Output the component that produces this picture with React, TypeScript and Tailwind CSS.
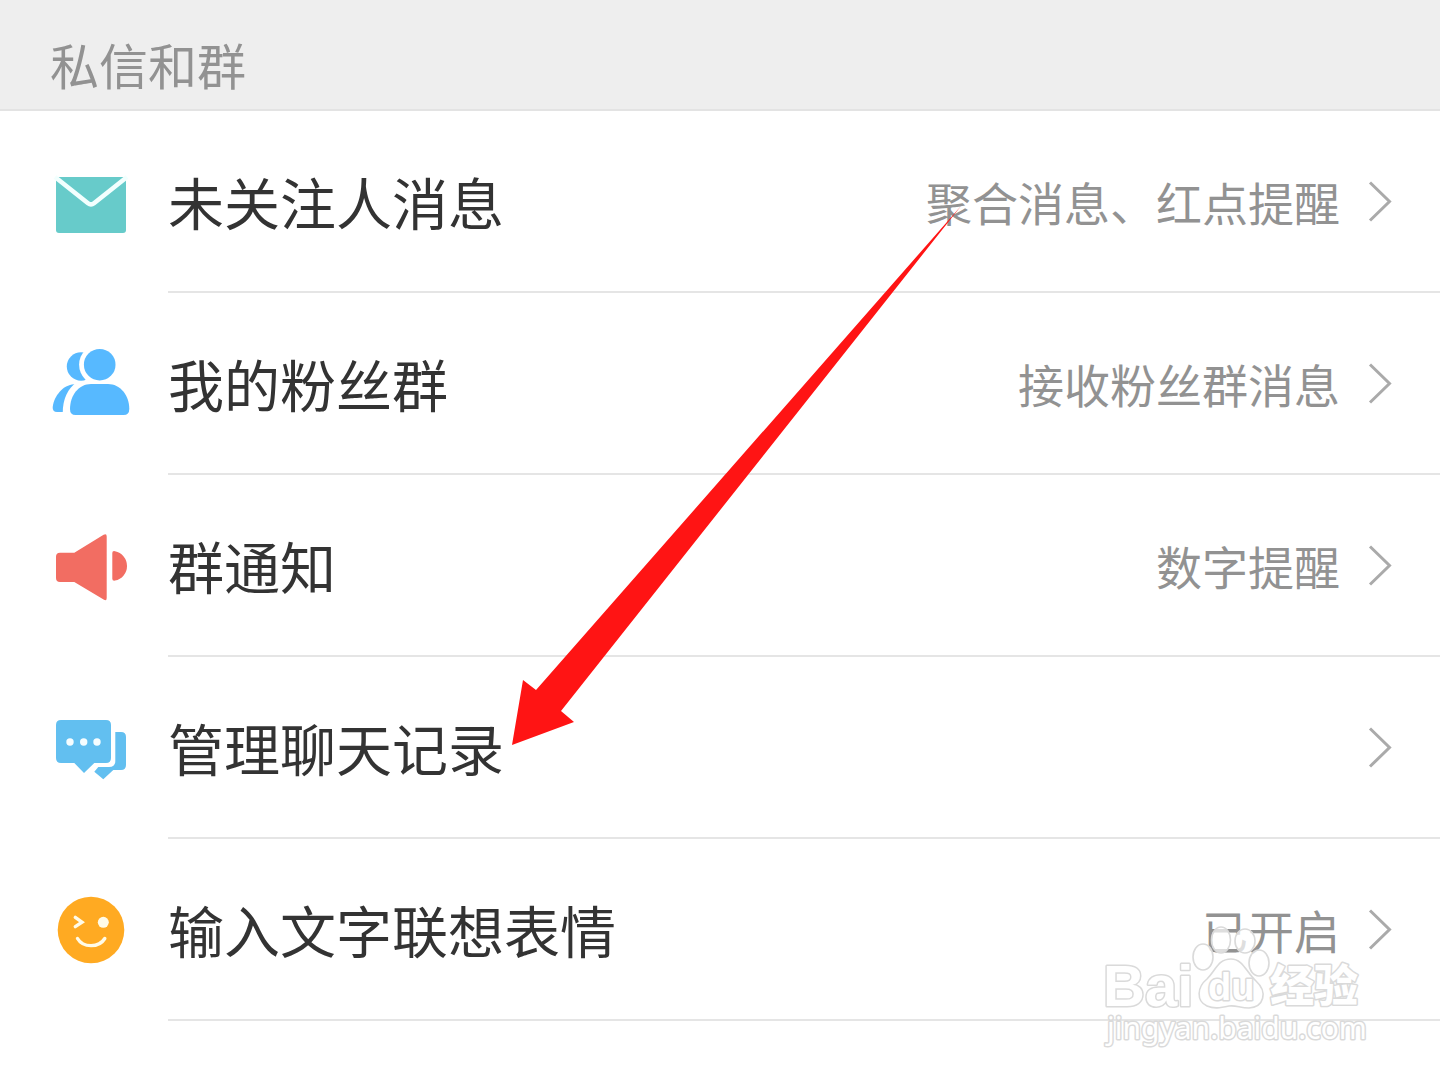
import type { ReactNode } from "react";

type Setting = {
  label: string;
  value?: string;
  icon: ReactNode;
};

const settings: Setting[] = [
  {
    label: "未关注人消息",
    value: "聚合消息、红点提醒",
    icon: (
      <>
        <rect x="7" y="18" width="70" height="56" rx="3" fill="#67cbca" />
        <path d="M6 18 L39 44.2 Q42 46.6 45 44.2 L78 18" fill="none" stroke="#f2fffe" strokeWidth="4.6" />
      </>
    ),
  },
  {
    label: "我的粉丝群",
    value: "接收粉丝群消息",
    icon: (
      <>
        <circle cx="32" cy="25.5" r="14.2" fill="#57b9ff" />
        <path d="M25 43.3 C14 44 5 55 3.7 66 Q3.4 71 8 71 H20 L40 43.3 Z" fill="#57b9ff" />
        <path d="M28 41 C19 47 13.7 58 13.7 72 H24 L44 41 Z" fill="#fff" />
        <circle cx="50.7" cy="23.7" r="20.6" fill="#fff" />
        <circle cx="50.7" cy="23.7" r="15.8" fill="#57b9ff" />
        <path d="M42 43 H59 C71 43 80.3 54 80.3 68 Q80.3 74 74.5 74 H26.5 Q21 74 21 68 C21 54 30 43 42 43 Z" fill="#57b9ff" />
      </>
    ),
  },
  {
    label: "群通知",
    value: "数字提醒",
    icon: (
      <g fill="#f26d62">
        <path d="M11 29.7 H25.3 L54.6 11.8 Q57.7 10 57.7 13.5 V75 Q57.7 78.5 54.6 76.6 L25.3 59 H11 Q7 59 7 55 V33.7 Q7 29.7 11 29.7 Z" />
        <path d="M63.3 30 Q63.3 27.6 66 28.2 A15 15 0 0 1 66 57.6 Q63.3 58 63.3 55.8 Z" />
      </g>
    ),
  },
  {
    label: "管理聊天记录",
    icon: (
      <>
        <path
          d="M12 15 H57 Q62 15 62 20 V53 Q62 58 57 58 H45.3 L35 68 L25.3 58 H12 Q7 58 7 53 V20 Q7 15 12 15 Z"
          fill="#62bff0"
        />
        <path
          d="M66.3 27 H72 Q77 27 77 32 V60 Q77 65 72 65 H64.3 L54.3 74.3 L45.3 66.7 L49.3 62 H60 Q66.3 62 66.3 56 Z"
          fill="#62bff0"
        />
        <circle cx="21" cy="37" r="3.7" fill="#f6fdff" />
        <circle cx="34.7" cy="37" r="3.7" fill="#f6fdff" />
        <circle cx="48" cy="37" r="3.7" fill="#f6fdff" />
      </>
    ),
  },
  {
    label: "输入文字联想表情",
    value: "已开启",
    icon: (
      <>
        <circle cx="42" cy="43" r="33.3" fill="#ffaa22" />
        <g fill="none" stroke="#fffbe8" strokeWidth="3.4" strokeLinecap="round">
          <path d="M26.3 30.4 L33 35.2 L26.3 39.6" />
          <path d="M28.5 51.5 C34 61 50 61 55.8 51.5" />
        </g>
        <circle cx="54.3" cy="35.3" r="5.5" fill="#fffbe8" />
      </>
    ),
  },
];

function Chevron() {
  return (
    <svg className="h-11 w-6 shrink-0" viewBox="0 0 24 44" fill="none" stroke="#aaaaaa" strokeWidth="3" aria-hidden="true">
      <path d="M2 3.5 L21.5 22.5 L2 41.5" />
    </svg>
  );
}

function SettingRow({ label, value, icon }: Setting) {
  return (
    <li>
      <button type="button" className="flex w-full items-stretch gap-9 pl-12 text-left">
        <svg className="mt-12 mb-[50px] size-[84px] shrink-0" viewBox="-1 0 84 84" aria-hidden="true">
          {icon}
        </svg>
        <span className="flex flex-1 items-center justify-between border-b-2 border-[#e5e5e5] pr-12">
          <span className="text-[56px] leading-[64px] text-[#333333]">{label}</span>
          <span className="flex items-center gap-7">
            {value && <span className="text-[46px] leading-[56px] text-[#929292]">{value}</span>}
            <Chevron />
          </span>
        </span>
      </button>
    </li>
  );
}

function Arrow() {
  return (
    <svg
      className="pointer-events-none absolute top-[200px] left-[504px] h-[552px] w-[464px]"
      viewBox="504 200 464 552"
      aria-hidden="true"
    >
      <path d="M961 206 L561 711 L574 722 L512 745 L523 680 L536 690 Z" fill="#ff1414" />
    </svg>
  );
}

function Watermark() {
  return (
    <svg
      className="pointer-events-none absolute top-[915px] right-[70px] h-[140px] w-[270px]"
      viewBox="1100 915 270 140"
      fill="#ffffff"
      stroke="#dadada"
      strokeWidth="3"
      strokeLinejoin="round"
      aria-hidden="true"
    >
      <g strokeWidth="1.6" fillOpacity="0.7">
        <ellipse cx="1203" cy="957" rx="10" ry="13" />
        <ellipse cx="1221" cy="940" rx="9.5" ry="13" />
        <ellipse cx="1245" cy="941" rx="10" ry="12" />
        <ellipse cx="1259" cy="963" rx="10" ry="13" />
        <path d="M1231 959 C1243 959 1246 972 1256 981 C1268 992 1264 1007 1249 1008 C1240 1008 1236 1005 1229 1006 C1220 1008 1214 1009 1207 1006 C1196 1001 1197 987 1207 979 C1216 970 1218 959 1231 959 Z" />
      </g>
      <text x="1103" y="1006" fontSize="58" fontWeight="700" fontFamily="'Liberation Sans', sans-serif" paintOrder="stroke">
        Bai
      </text>
      <text x="1208" y="1000" fontSize="38" fontWeight="700" fontFamily="'Liberation Sans', sans-serif" paintOrder="stroke">
        du
      </text>
      <text x="1270" y="1002" fontSize="44" fontWeight="900" fontFamily="'Noto Sans CJK SC', sans-serif" paintOrder="stroke">
        经验
      </text>
      <text x="1107" y="1039" fontSize="30" fontFamily="'Noto Sans', sans-serif" paintOrder="stroke">
        jingyan.baidu.com
      </text>
    </svg>
  );
}

export default function App() {
  return (
    <main className="relative h-screen overflow-hidden bg-white font-['Noto_Sans_CJK_SC',sans-serif]">
      <h1 className="border-b-2 border-[#e3e3e3] bg-[#eeeeee] px-[50px] pt-8 pb-[13px] text-[49px] leading-[64px] text-[#929292]">
        私信和群
      </h1>
      <ul>
        {settings.map((setting) => (
          <SettingRow key={setting.label} {...setting} />
        ))}
      </ul>
      <Arrow />
      <Watermark />
    </main>
  );
}
